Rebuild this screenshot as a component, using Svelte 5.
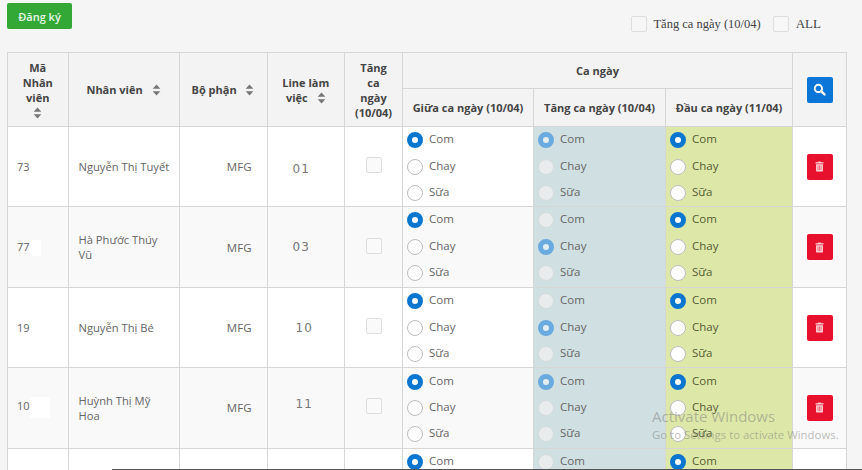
<script>
	const rows = [
		{ id: '73', name: 'Nguyễn Thị Tuyết', line: '01', extra: 'Com', mask: 0 },
		{ id: '77', name: 'Hà Phước Thúy\nVũ', line: '03', extra: 'Chay', mask: 11 },
		{ id: '19', name: 'Nguyễn Thị Bé', line: '10', extra: 'Chay', mask: 0 },
		{ id: '10', name: 'Huỳnh Thị Mỹ\nHoa', line: '11', extra: 'Com', mask: 20 },
		{ id: '', name: '', line: '', extra: '', mask: 0 }
	];
	const meals = ['Com', 'Chay', 'Sữa'];
</script>

{#snippet sort()}
	<svg class="sort" viewBox="0 0 10 14" width="9" height="12">
		<path d="M5 0.5 9.5 5.6H0.5Z M5 13.5 0.5 8.4H9.5Z" fill="#777" />
	</svg>
{/snippet}

{#snippet meal(selected, tone)}
	<div class="meals">
		{#each meals as m}
			<div class="meal">
				<span class="radio {tone}" class:on={m === selected}></span>
				<span class="meal-text">{m}</span>
			</div>
		{/each}
	</div>
{/snippet}

<main>
	<div class="top">
		<button class="register">Đăng ký</button>
		<div class="filters">
			<span class="box"></span>
			<span>Tăng ca ngày (10/04)</span>
			<span class="box all"></span>
			<span class="all-label">ALL</span>
		</div>
	</div>

	<table>
		<colgroup>
			<col style="width:60.5px" />
			<col style="width:111px" />
			<col style="width:88px" />
			<col style="width:77.5px" />
			<col style="width:58px" />
			<col style="width:131px" />
			<col style="width:132px" />
			<col style="width:127px" />
			<col style="width:54px" />
		</colgroup>
		<thead>
			<tr class="head-a">
				<th rowspan="2">Mã<br />Nhân<br />viên<br />{@render sort()}</th>
				<th rowspan="2">Nhân viên {@render sort()}</th>
				<th rowspan="2">Bộ phận {@render sort()}</th>
				<th rowspan="2">Line làm<br />việc {@render sort()}</th>
				<th rowspan="2">Tăng<br />ca<br />ngày<br />(10/04)</th>
				<th colspan="3">Ca ngày</th>
				<th rowspan="2">
					<span class="icon-btn blue">
						<svg viewBox="0 0 14 14" width="13" height="13">
							<circle cx="5.8" cy="5.8" r="3.9" fill="none" stroke="#fff" stroke-width="2.1" />
							<path d="M8.8 8.8 12.4 12.4" stroke="#fff" stroke-width="2.6" stroke-linecap="round" />
						</svg>
					</span>
				</th>
			</tr>
			<tr class="head-b">
				<th>Giữa ca ngày (10/04)</th>
				<th>Tăng ca ngày (10/04)</th>
				<th>Đầu ca ngày (11/04)</th>
			</tr>
		</thead>
		<tbody>
			{#each rows as r}
				<tr>
					<td class="id">
						{r.id}{#if r.mask}<span class="mask" class:tall={r.mask > 11} style="width:{r.mask}px"></span>{/if}
					</td>
					<td class="name">{r.name}</td>
					<td class="dept">{r.id ? 'MFG' : ''}</td>
					<td class="line"><span class="line-{r.line}">{r.line}</span></td>
					<td class="check">{#if r.id}<span class="box"></span>{/if}</td>
					<td class="choice">{@render meal('Com', '')}</td>
					<td class="choice tint-blue">{@render meal(r.extra, 'muted')}</td>
					<td class="choice tint-green">{@render meal('Com', '')}</td>
					<td class="action">
						{#if r.id}
							<span class="icon-btn red">
								<svg viewBox="0 0 10 12" width="9" height="11">
									<path d="M3.4 1.4 3.9.4H6.1L6.6 1.4H9.4V2.7H.6V1.4Z" fill="#fbd5da" />
									<path d="M1.2 3.4H8.8V10.6Q8.8 11.6 7.8 11.6H2.2Q1.2 11.6 1.2 10.6Z" fill="#fbd5da" />
									<path d="M3.3 4.8V10M5 4.8V10M6.7 4.8V10" stroke="#e8112d" stroke-width=".6" />
								</svg>
							</span>
						{/if}
					</td>
				</tr>
			{/each}
		</tbody>
	</table>

	<div class="watermark">
		<div class="wm-title">Activate Windows</div>
		<div class="wm-sub">Go to Settings to activate Windows.</div>
	</div>
	<div class="edge"></div>
</main>

<style>
	:global(body) {
		margin: 0;
		overflow: hidden;
	}

	main {
		position: relative;
		width: 862px;
		height: 470px;
		overflow: hidden;
		background: #f5f5f5;
		font-family: 'Open Sans', sans-serif;
		color: #666;
		font-size: 11.5px;
	}

	.top {
		display: flex;
		justify-content: space-between;
		height: 52px;
		padding: 3px 41px 0 7px;
		box-sizing: border-box;
	}

	.register {
		width: 65px;
		height: 26px;
		padding: 0;
		border: none;
		border-radius: 2px;
		background: #33a837;
		color: #e8f6e8;
		font-family: inherit;
		font-size: 11px;
		font-weight: 600;
	}

	.filters {
		display: flex;
		align-items: center;
		height: 20px;
		margin-top: 11px;
		font-family: 'Liberation Serif', serif;
		font-size: 12.5px;
		color: #444;
	}

	.filters .box {
		margin-right: 6px;
		background: #f7f7f7;
	}

	.filters .all {
		margin-left: 12px;
		margin-right: 7px;
	}

	.all-label {
		font-size: 13px;
	}

	.box {
		display: inline-block;
		width: 14px;
		height: 14px;
		border: 1px solid #dedede;
		border-radius: 2px;
		background: #fafafa;
		box-sizing: content-box;
	}

	table {
		width: 839px;
		margin-left: 7px;
		border-collapse: collapse;
		table-layout: fixed;
	}

	th,
	td {
		border: 1px solid #d6d6d6;
		padding: 0;
	}

	th {
		background: #f3f3f3;
		color: #444;
		font-weight: 700;
		font-size: 11px;
		line-height: 15px;
		text-align: center;
	}

	.head-a {
		height: 36px;
	}

	.head-b {
		height: 38px;
	}

	.sort {
		vertical-align: -2px;
		margin-left: 6px;
	}

	th:first-child .sort {
		margin-left: 0;
	}

	tbody tr {
		height: 80px;
		background: #fff;
	}

	tbody tr:nth-child(2) {
		height: 81px;
	}

	tbody tr:nth-child(even) {
		background: #f9f9f9;
	}

	.id {
		padding-left: 9px;
		font-size: 11px;
	}

	.mask {
		display: inline-block;
		height: 16px;
		vertical-align: middle;
		background: #fff;
	}

	.mask.tall {
		height: 21px;
	}

	.name {
		padding-left: 10px;
		font-size: 11.2px;
		line-height: 15px;
		white-space: pre-line;
	}

	.dept {
		padding-right: 15px;
		text-align: right;
	}

	.line {
		padding-left: 25px;
		font-family: 'DejaVu Sans', sans-serif;
		font-size: 12px;
		letter-spacing: 1px;
		color: #777;
	}

	.line-01 {
		position: relative;
		top: 2px;
	}

	.line-10 {
		margin-left: 3px;
	}

	.line-11 {
		position: relative;
		top: -4px;
		margin-left: 3px;
	}

	.check,
	.action {
		text-align: center;
	}

	.choice {
		vertical-align: top;
	}

	.meals {
		padding-left: 4px;
	}

	.meal {
		display: flex;
		align-items: center;
		gap: 6px;
		height: 26.4px;
		font-size: 11.5px;
	}

	.meal-text {
		margin-top: -3px;
	}

	.radio {
		width: 16px;
		height: 16px;
		flex: none;
		box-sizing: border-box;
		border: 1px solid #bdbdbd;
		border-radius: 50%;
		background: #fff;
	}

	.radio.on {
		border: 5px solid #0b76d0;
	}

	.radio.muted {
		border-color: #d5dcdd;
		background: #e8ecec;
	}

	.radio.muted.on {
		border: 5px solid #69aadf;
		background: #e4eef0;
	}

	.tint-blue {
		background: #d0dfe1;
	}

	.tint-green {
		background: #dde8a8;
		color: #555b35;
	}

	.icon-btn {
		display: inline-flex;
		align-items: center;
		justify-content: center;
		width: 26px;
		height: 26px;
		border-radius: 2px;
		vertical-align: middle;
	}

	.blue {
		background: #0b76d8;
	}

	.red {
		background: #e8112d;
	}

	.watermark {
		position: absolute;
		left: 652px;
		top: 406px;
		color: rgba(125, 125, 125, 0.5);
		pointer-events: none;
		white-space: nowrap;
	}

	.wm-title {
		font-size: 15px;
		line-height: 20px;
	}

	.wm-sub {
		font-size: 11.4px;
		line-height: 16px;
		margin-top: 1px;
	}

	.edge {
		position: absolute;
		left: 112px;
		right: 0;
		bottom: 0;
		height: 1px;
		background: #555;
	}
</style>
